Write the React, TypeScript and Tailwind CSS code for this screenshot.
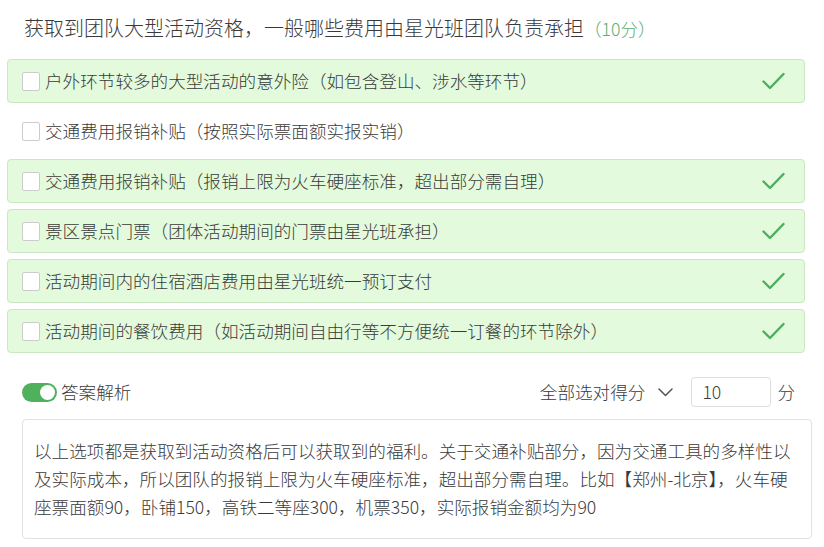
import React from "react";

const options = [
  { text: "户外环节较多的大型活动的意外险（如包含登山、涉水等环节）", correct: true },
  { text: "交通费用报销补贴（按照实际票面额实报实销）", correct: false },
  { text: "交通费用报销补贴（报销上限为火车硬座标准，超出部分需自理）", correct: true },
  { text: "景区景点门票（团体活动期间的门票由星光班承担）", correct: true },
  { text: "活动期间内的住宿酒店费用由星光班统一预订支付", correct: true },
  { text: "活动期间的餐饮费用（如活动期间自由行等不方便统一订餐的环节除外）", correct: true },
];

function Check() {
  return (
    <svg width="23" height="18" viewBox="0 0 23 18" fill="none">
      <path d="M1.5 9.5 L8 16 L21.5 2" stroke="#4cae5f" strokeWidth="2.4" strokeLinecap="round" strokeLinejoin="round" />
    </svg>
  );
}

export default function App() {
  return (
    <div
      className="w-[824px] h-[547px] bg-white text-[#3a3a3a] overflow-hidden font-light"
      style={{ fontFamily: '"Noto Sans CJK SC", "Noto Sans", sans-serif' }}
    >
      <div className="mt-[14px] pl-[24px] h-[28px] leading-[28px] text-[20px] whitespace-nowrap">
        获取到团队大型活动资格，一般哪些费用由星光班团队负责承担
        <span className="text-[17.6px] text-[#5cae6c]">（10分）</span>
      </div>

      <div className="mt-[17px] ml-[7px] mr-[19px] flex flex-col gap-[6px]">
        {options.map((o, i) => (
          <div
            key={i}
            className={
              "h-[44px] flex items-center pl-[14px] pr-[19px] rounded-[4px] border " +
              (o.correct ? "bg-[#e3fadc] border-[#cbe7c3]" : "bg-white border-transparent")
            }
          >
            <div className="w-[18px] h-[19px] bg-white border border-[#cccccc] rounded-[2px] shrink-0" />
            <span className="ml-[5px] text-[17.6px] leading-[24px] whitespace-nowrap">{o.text}</span>
            <div className="flex-1" />
            {o.correct && <Check />}
          </div>
        ))}
      </div>

      <div className="mt-[24px] pl-[22px] pr-[29px] h-[30px] flex items-center">
        <div className="w-[35px] h-[19px] rounded-full bg-[#4fb15c] relative shrink-0">
          <div className="absolute right-[2px] top-[2px] w-[15px] h-[15px] rounded-full bg-white" />
        </div>
        <span className="ml-[4px] text-[17.6px]">答案解析</span>
        <div className="flex-1" />
        <span className="text-[17.6px]">全部选对得分</span>
        <svg className="ml-[13px]" width="15" height="9" viewBox="0 0 15 9" fill="none">
          <path d="M1 1 L7.5 7.5 L14 1" stroke="#555" strokeWidth="1.5" strokeLinecap="round" strokeLinejoin="round" />
        </svg>
        <div className="ml-[18px] w-[80px] h-[30px] border border-[#dddddd] rounded-[4px] flex items-center pl-[10px] text-[17.6px]">
          10
        </div>
        <span className="ml-[6px] text-[17.6px]">分</span>
      </div>

      <div className="mt-[12px] ml-[22px] w-[790px] border border-[#e2e2e2] rounded-[4px] px-[11px] py-[17px] text-[17.6px] leading-[28px]">
        以上选项都是获取到活动资格后可以获取到的福利。关于交通补贴部分，因为交通工具的多样性以及实际成本，所以团队的报销上限为火车硬座标准，超出部分需自理。比如【郑州-北京】，火车硬座票面额90，卧铺150，高铁二等座300，机票350，实际报销金额均为90
      </div>
    </div>
  );
}
